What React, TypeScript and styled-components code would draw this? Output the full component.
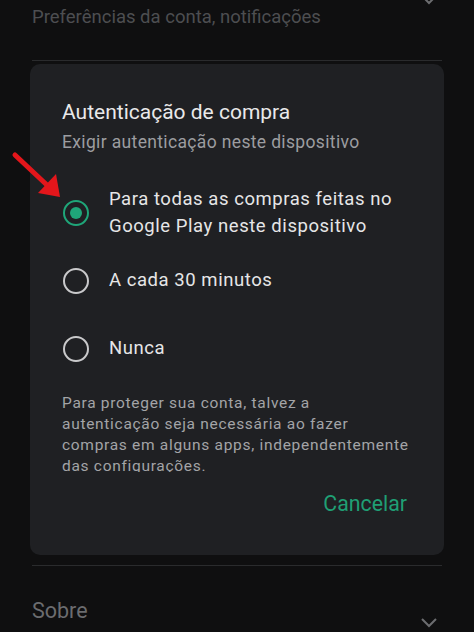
import React from "react";
import styled, { createGlobalStyle } from "styled-components";

const GlobalStyle = createGlobalStyle`
  html, body {
    margin: 0;
    padding: 0;
    background: #0f0f10;
  }
  body {
    width: 474px;
    height: 632px;
    overflow: hidden;
    font-family: Roboto, "Noto Sans", "Liberation Sans", sans-serif;
  }
`;

const Screen = styled.div`
  position: relative;
  width: 474px;
  height: 632px;
  display: flex;
  flex-direction: column;
  background: #0f0f10;
`;

const SettingRow = styled.div<{ $height: number }>`
  height: ${(p) => p.$height}px;
  display: flex;
  align-items: flex-start;
  justify-content: space-between;
  padding: 0 36px 0 32px;
`;

const SettingText = styled.span<{ $size: number; $color: string; $top: number }>`
  margin-top: ${(p) => p.$top}px;
  font-size: ${(p) => p.$size}px;
  line-height: 24px;
  color: ${(p) => p.$color};
`;

const Chevron = styled.svg<{ $top: number }>`
  margin-top: ${(p) => p.$top}px;
  flex-shrink: 0;
`;

const Divider = styled.div<{ $gap?: number }>`
  height: 1px;
  margin: ${(p) => p.$gap ?? 0}px 32px 0;
  background: #2a2b2d;
`;

const Dialog = styled.div`
  margin: 3px 30px 0;
  height: 492px;
  box-sizing: border-box;
  padding: 35px 37px 0 32px;
  background: #1f2023;
  border-radius: 10px;
  display: flex;
  flex-direction: column;
`;

const Title = styled.h2`
  margin: 0;
  font-size: 21px;
  font-weight: 400;
  line-height: 26px;
  color: #e9e9ea;
`;

const Subtitle = styled.p`
  margin: 6px 0 0;
  font-size: 17.5px;
  line-height: 22px;
  color: #9c9da0;
  letter-spacing: 0.35px;
`;

const ScrollArea = styled.div`
  margin-top: 26px;
  margin-right: -10px;
  height: 293px;
  overflow: hidden;
  flex-shrink: 0;
`;

const Option = styled.label`
  height: 68px;
  display: flex;
  align-items: center;
  gap: 20px;
  cursor: pointer;
`;

const Radio = styled.span<{ $checked: boolean }>`
  flex-shrink: 0;
  width: 26px;
  height: 26px;
  box-sizing: border-box;
  margin-left: 1px;
  border-radius: 50%;
  border: 2.5px solid ${(p) => (p.$checked ? "#1fa679" : "#c9c9cb")};
  display: flex;
  align-items: center;
  justify-content: center;

  &::after {
    content: "";
    width: 12px;
    height: 12px;
    border-radius: 50%;
    background: #1fa679;
    display: ${(p) => (p.$checked ? "block" : "none")};
  }
`;

const OptionText = styled.span`
  font-size: 18.5px;
  line-height: 27px;
  letter-spacing: 0.55px;
  color: #e6e6e7;
`;

const Note = styled.p`
  margin: 10px 0 0;
  font-size: 15.5px;
  line-height: 21px;
  letter-spacing: 0.7px;
  white-space: nowrap;
  color: #a3a4a7;
`;

const Actions = styled.div`
  margin-top: 19px;
  display: flex;
  justify-content: flex-end;
`;

const TextButton = styled.button`
  border: none;
  background: none;
  padding: 0;
  font-family: inherit;
  font-size: 21.3px;
  line-height: 26px;
  color: #1f9f74;
  cursor: pointer;
`;

const Annotation = styled.svg`
  position: absolute;
  left: 0;
  top: 140px;
  pointer-events: none;
`;

const options = [
  "Para todas as compras feitas no Google Play neste dispositivo",
  "A cada 30 minutos",
  "Nunca",
];

const noteLines = [
  "Para proteger sua conta, talvez a",
  "autenticação seja necessária ao fazer",
  "compras em alguns apps, independentemente",
  "das configurações.",
];

const ChevronDown: React.FC<{ top: number }> = ({ top }) => (
  <Chevron $top={top} width="18" height="12" viewBox="0 0 18 12">
    <path d="M2 2l7 7 7-7" fill="none" stroke="#6c6d70" strokeWidth="2" />
  </Chevron>
);

const App: React.FC = () => {
  const [selected, setSelected] = React.useState(0);

  return (
    <Screen>
      <GlobalStyle />
      <SettingRow $height={60}>
        <SettingText $size={18.5} $color="#4d4e51" $top={5}>
          Preferências da conta, notificações
        </SettingText>
        <ChevronDown top={-6} />
      </SettingRow>
      <Divider />
      <Dialog>
        <Title>Autenticação de compra</Title>
        <Subtitle>Exigir autenticação neste dispositivo</Subtitle>
        <ScrollArea>
          {options.map((label, i) => (
            <Option key={label} onClick={() => setSelected(i)}>
              <Radio $checked={selected === i} />
              <OptionText>{label}</OptionText>
            </Option>
          ))}
          <Note>
            {noteLines.map((line, i) => (
              <React.Fragment key={line}>
                {line}
                {i < noteLines.length - 1 && <br />}
              </React.Fragment>
            ))}
          </Note>
        </ScrollArea>
        <Actions>
          <TextButton>Cancelar</TextButton>
        </Actions>
      </Dialog>
      <Divider $gap={10} />
      <SettingRow $height={66}>
        <SettingText $size={21.5} $color="#6b6c6f" $top={33}>
          Sobre
        </SettingText>
        <ChevronDown top={51} />
      </SettingRow>
      <Annotation width="70" height="70" viewBox="0 0 70 70">
        <path d="M15 15L48 46" stroke="#e3161b" strokeWidth="5" strokeLinecap="round" />
        <path d="M60 57L38 53L56 34Z" fill="#e3161b" />
      </Annotation>
    </Screen>
  );
};

export default App;
